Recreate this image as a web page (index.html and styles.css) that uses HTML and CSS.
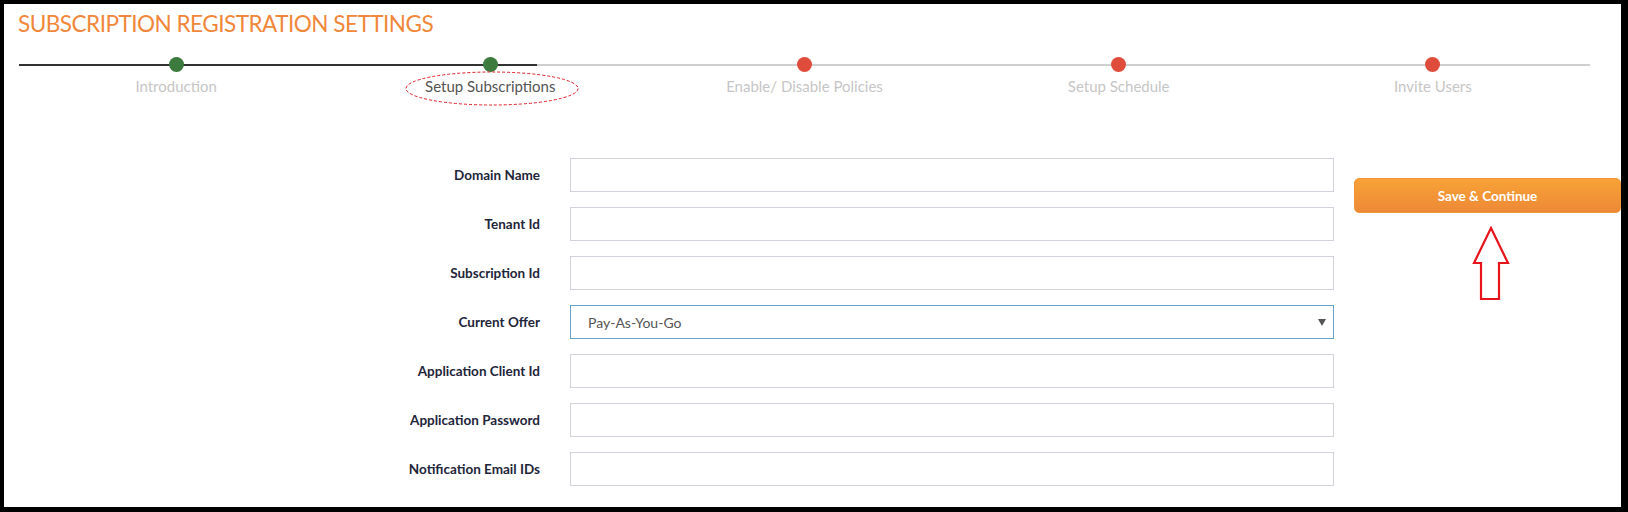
FILE: index.html
```html
<!DOCTYPE html>
<html lang="en">
<head>
<meta charset="utf-8">
<title>Subscription Registration Settings</title>
<link rel="stylesheet" href="styles.css">
</head>
<body>
<div class="frame">
  <h1 class="title">SUBSCRIPTION REGISTRATION SETTINGS</h1>

  <div class="stepper">
    <div class="track"><div class="progress"></div></div>
    <div class="step done"><span class="dot"></span><span class="label">Introduction</span></div>
    <div class="step done current"><span class="dot"></span><span class="label">Setup Subscriptions</span>
      <svg class="ring" width="174" height="35" viewBox="0 0 174 35"><ellipse cx="87" cy="17.5" rx="86" ry="16.5" fill="none" stroke="#e01e26" stroke-width="1" stroke-dasharray="3 2"/></svg>
    </div>
    <div class="step"><span class="dot"></span><span class="label">Enable/ Disable Policies</span></div>
    <div class="step"><span class="dot"></span><span class="label">Setup Schedule</span></div>
    <div class="step"><span class="dot"></span><span class="label">Invite Users</span></div>
  </div>

  <div class="content">
    <form class="form">
      <div class="row"><label class="lbl">Domain Name</label><input class="field" type="text"></div>
      <div class="row"><label class="lbl">Tenant Id</label><input class="field" type="text"></div>
      <div class="row"><label class="lbl">Subscription Id</label><input class="field" type="text"></div>
      <div class="row"><label class="lbl">Current Offer</label>
        <div class="field select"><span class="sel-text">Pay-As-You-Go</span><span class="caret"></span></div>
      </div>
      <div class="row"><label class="lbl">Application Client Id</label><input class="field" type="text"></div>
      <div class="row"><label class="lbl">Application Password</label><input class="field" type="text"></div>
      <div class="row"><label class="lbl">Notification Email IDs</label><input class="field" type="text"></div>
    </form>
    <div class="side">
      <button class="btn" type="button">Save &amp; Continue</button>
      <svg class="arrow" width="38" height="76" viewBox="0 0 38 76"><path d="M19 2 L36 37 L27 37 L27 73 L9 73 L9 37 L2 37 Z" fill="none" stroke="#e8141c" stroke-width="2.2" stroke-linejoin="miter"/></svg>
    </div>
  </div>
</div>
</body>
</html>
```
FILE: styles.css
```css
* { box-sizing: border-box; }
html, body { margin: 0; padding: 0; }
body {
  background: #000;
  width: 1628px;
  height: 512px;
  padding: 4px 7px 5px 4px;
  font-family: "Lato", "Open Sans", sans-serif;
}
.frame {
  background: #fff;
  width: 1617px;
  height: 503px;
  overflow: hidden;
}
.title {
  margin: 0;
  padding: 5px 0 0 14px;
  font-size: 22.5px;
  line-height: 30px;
  font-weight: 400;
  color: #f0873a;
  letter-spacing: -0.5px;
}
.stepper {
  position: relative;
  display: grid;
  grid-template-columns: repeat(5, 1fr);
  margin: 18px 31px 0 15px;
}
.track {
  position: absolute;
  left: 0; right: 0; top: 6.5px;
  height: 2px;
  background: #cfcfcf;
}
.progress {
  width: 33%;
  height: 2px;
  background: #333;
}
.step {
  position: relative;
  display: flex;
  flex-direction: column;
  align-items: center;
}
.dot {
  position: relative;
  width: 15px;
  height: 15px;
  border-radius: 50%;
  background: #e04c3b;
}
.step.done .dot { background: #3c7a3e; }
.label {
  margin-top: 4px;
  font-size: 15px;
  line-height: 20px;
  color: #c6c6c6;
}
.step.current .label { color: #555; }
.ring {
  position: absolute;
  left: 50%;
  top: 14px;
  margin-left: -85px;
}
.content {
  display: flex;
  margin-top: 62px;
}
.form {
  width: 1330px;
  margin: 0;
}
.row {
  display: flex;
  align-items: center;
  height: 34px;
  margin-bottom: 15px;
}
.lbl {
  width: 536px;
  margin-right: 30px;
  text-align: right;
  font-size: 13.5px;
  font-weight: 700;
  color: #22253a;
}
.field {
  width: 764px;
  height: 34px;
  border: 1px solid #d1d3dc;
  background: #fff;
  margin: 0;
  padding: 0 17px;
  font-family: inherit;
  outline: none;
}
.select {
  display: flex;
  align-items: center;
  justify-content: space-between;
  border-color: #69a4c8;
}
.sel-text {
  font-size: 14px;
  color: #555;
}
.caret {
  width: 0; height: 0;
  border-left: 4px solid transparent;
  border-right: 4px solid transparent;
  border-top: 7px solid #555;
  margin-right: -10px;
}
.side {
  width: 267px;
  margin-left: 20px;
  padding-top: 20px;
  display: flex;
  flex-direction: column;
  align-items: center;
}
.btn {
  width: 267px;
  height: 35px;
  border: 1px solid #f09339;
  border-radius: 5px;
  background: linear-gradient(#f7a236, #ee8937);
  color: #fff;
  font-family: inherit;
  font-size: 13.5px;
  font-weight: 700;
  cursor: pointer;
}
.arrow {
  margin-top: 13px;
  margin-left: 7px;
}
```
